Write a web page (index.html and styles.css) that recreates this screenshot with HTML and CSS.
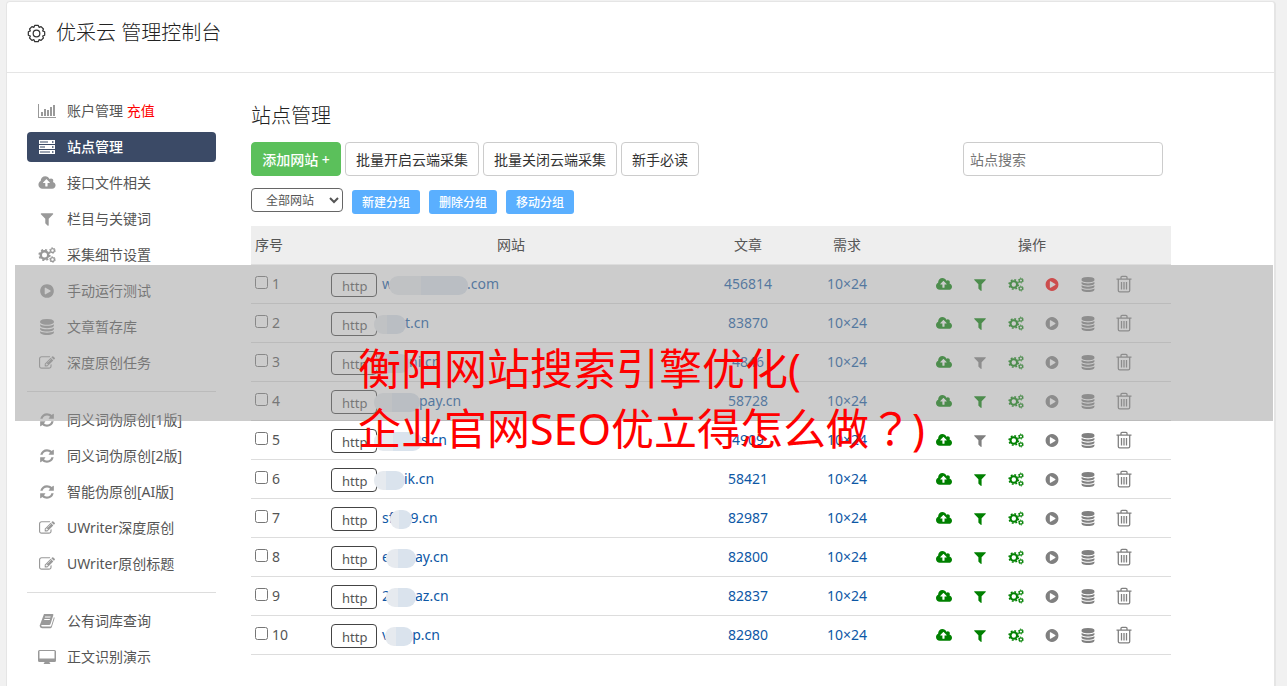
FILE: index.html
```html
<!DOCTYPE html>
<html lang="zh-CN">
<head>
    <meta charset="UTF-8">
    <meta name="viewport" content="width=device-width, initial-scale=1.0">
    <title>优采云 管理控制台</title>
    <link rel="stylesheet" href="styles.css">
</head>
<body>
    <svg class="sprite" aria-hidden="true">
        <symbol id="i-gear" viewBox="0 0 20 20">
            <path fill="none" stroke="currentColor" stroke-width="1.3" d="M16.500 7.300L18.600 8.200V11.800L16.500 12.700L17.300 14.800L14.800 17.300L12.700 16.500L11.800 18.600H8.200L7.300 16.500L5.200 17.300L2.700 14.800L3.500 12.700L1.400 11.800V8.200L3.500 7.300L2.700 5.200L5.200 2.700L7.300 3.500L8.200 1.400H11.800L12.700 3.500L14.800 2.700L17.300 5.200z" stroke-linejoin="round"/>
            <circle cx="10" cy="10" r="3.500" fill="none" stroke="currentColor" stroke-width="1.300"/>
        </symbol>
        <symbol id="i-chart" viewBox="0 0 18 16">
            <path d="M0 1h1v13h17v1H0zM3 9h2v4H3zM6 6h2v7H6zM9 7h2v6H9zM12 4h2v9h-2zM15 2h2v11h-2z"/>
        </symbol>
        <symbol id="i-server" viewBox="0 0 18 16">
            <path fill-rule="evenodd" d="M1 1h16v4H1zM2 2.500v1h8v-1zM14 2.300v1.400h1.500V2.300zM1 6h16v4H1zM2 7.500v1h5v-1zM14 7.300v1.400h1.500V7.300zM1 11h16v4H1zM2 12.500v1h10v-1zM14 12.300v1.400h1.500v-1.400z"/>
        </symbol>
        <symbol id="i-cloud" viewBox="-64 0 1920 1792">
            <path d="M1216 864q0-14-9-23l-352-352q-9-9-23-9t-23 9l-351 351q-10 12-10 24 0 14 9 23t23 9h224v352q0 13 9.500 22.500t22.500 9.500h192q13 0 22.500-9.500t9.500-22.500v-352h224q13 0 22.500-9.500t9.500-22.500zm640 288q0 159-112.500 271.500t-271.500 112.500h-1088q-185 0-316.500-131.500t-131.500-316.500q0-130 70-240t188-165q-2-30-2-43 0-212 150-362t362-150q156 0 285.500 87t188.500 231q71-62 166-62 106 0 181 75t75 181q0 76-41 138 130 31 213.500 135.500t83.500 238.500z"/>
        </symbol>
        <symbol id="i-filter" viewBox="0 0 1792 1792">
            <path d="M1595 295q17 41-14 70l-493 493v742q0 42-39 59-13 5-25 5-27 0-45-19l-256-256q-19-19-19-45v-486l-493-493q-31-29-14-70 17-39 59-39h1280q42 0 59 39z"/>
        </symbol>
        <symbol id="i-cogs" viewBox="0 0 18 16">
            <g fill="none" stroke="currentColor">
                <circle cx="6.500" cy="8" r="3.700" stroke-width="2.400"/>
                <circle cx="6.500" cy="8" r="5.300" stroke-width="1.600" stroke-dasharray="2.080 2.080"/>
                <circle cx="14.500" cy="3.500" r="1.900" stroke-width="1.300"/>
                <circle cx="14.500" cy="3.500" r="2.800" stroke-width="1" stroke-dasharray="1.460 1.460"/>
                <circle cx="14.500" cy="12.500" r="1.900" stroke-width="1.300"/>
                <circle cx="14.500" cy="12.500" r="2.800" stroke-width="1" stroke-dasharray="1.460 1.460"/>
            </g>
        </symbol>
        <symbol id="i-play" viewBox="0 0 1792 1792">
            <path d="M896 128q209 0 385.500 103t279.500 279.500 103 385.500-103 385.500-279.500 279.500-385.500 103-385.500-103-279.500-279.500-103-385.500 103-385.500 279.500-279.500 385.500-103zm384 823q32-18 32-55t-32-55l-544-320q-31-19-64-1-32 19-32 56v640q0 37 32 56 16 8 32 8 17 0 32-9z"/>
        </symbol>
        <symbol id="i-db" viewBox="0 0 1792 1792">
            <path d="M896 768q237 0 443-43t325-127v170q0 69-103 128t-280 93.500-385 34.500-385-34.500-280-93.500-103-128v-170q119 84 325 127t443 43zm0 768q237 0 443-43t325-127v170q0 69-103 128t-280 93.500-385 34.500-385-34.500-280-93.500-103-128v-170q119 84 325 127t443 43zm0-384q237 0 443-43t325-127v170q0 69-103 128t-280 93.500-385 34.500-385-34.500-280-93.500-103-128v-170q119 84 325 127t443 43zm0-1152q208 0 385 34.500t280 93.500 103 128v128q0 69-103 128t-280 93.500-385 34.500-385-34.500-280-93.500-103-128v-128q0-69 103-128t280-93.500 385-34.500z"/>
        </symbol>
        <symbol id="i-edit" viewBox="0 0 1792 1792">
            <path d="M888 1184l116-116-152-152-116 116v56h96v96h56zm440-720q-16-16-33 1l-350 350q-17 17-1 33t33-1l350-350q17-17 1-33zm80 594v190q0 119-84.500 203.500t-203.500 84.500h-832q-119 0-203.500-84.500t-84.500-203.500v-832q0-119 84.500-203.500t203.500-84.500h832q63 0 117 25 15 7 18 23 3 17-9 29l-49 49q-14 14-32 8-23-6-45-6h-832q-66 0-113 47t-47 113v832q0 66 47 113t113 47h832q66 0 113-47t47-113v-126q0-13 9-22l64-64q15-15 35-7t20 29zm-96-738l288 288-672 672h-288v-288zm444 132l-92 92-288-288 92-92q28-28 68-28t68 28l152 152q28 28 28 68t-28 68z"/>
        </symbol>
        <symbol id="i-refresh" viewBox="0 0 1792 1792">
            <path d="M1639 1056q0 5-1 7-64 268-268 434.500t-478 166.500q-146 0-282.500-55t-243.500-157l-129 129q-19 19-45 19t-45-19-19-45v-448q0-26 19-45t45-19h448q26 0 45 19t19 45-19 45l-137 137q71 66 161 102t187 36q134 0 250-65t186-179q11-17 53-117 8-23 30-23h192q13 0 22.500 9.500t9.500 22.500zm25-800v448q0 26-19 45t-45 19h-448q-26 0-45-19t-19-45 19-45l138-138q-148-137-349-137-134 0-250 65t-186 179q-11 17-53 117-8 23-30 23h-199q-13 0-22.500-9.500t-9.500-22.500v-7q65-268 270-434.500t480-166.500q146 0 284 55.500t245 156.500l130-129q19-19 45-19t45 19 19 45z"/>
        </symbol>
        <symbol id="i-book" viewBox="0 0 16 16">
            <path fill-rule="evenodd" d="M5 1h8.500q1.200 0 .8 1.200L11.500 11q-.3 1-1.400 1H3q-1 0-.8.800T3.500 13.600h7.700q.8 0 1-.7L15 4q.8.500.5 1.500L12.800 14q-.4 1.200-1.600 1.200H3Q.8 15.200.6 12.800zM6.100 3.600l-.3 1h5.600l.3-1zM5.400 6l-.3 1h5.600l.3-1z"/>
        </symbol>
        <symbol id="i-desktop" viewBox="0 0 18 16">
            <path fill-rule="evenodd" d="M1.500 1h15q1.500 0 1.500 1.500v9q0 1.500-1.500 1.500h-5q0 1 .8 1.500v.5H5.700v-.5q.8-.5.8-1.500h-5Q0 13 0 11.500v-9Q0 1 1.500 1zM1.500 2v7.500h15V2z"/>
        </symbol>
        <symbol id="i-trash" viewBox="0 0 16 18">
            <path fill="none" stroke="currentColor" stroke-width="1.300" d="M.5 4.200h15M5 4V2.300q0-1 1-1h4q1 0 1 1V4M2.300 4.500v11q0 1.400 1.400 1.400h8.600q1.400 0 1.400-1.400v-11M5.500 7v7.500M8 7v7.500M10.500 7v7.500"/>
        </symbol>
    </svg>

    <div class="card">
        <header class="card-header">
            <svg class="icon"><use href="#i-gear"/></svg>
            <h1>优采云 管理控制台</h1>
        </header>

        <div class="card-body">
            <nav class="sidebar">
                <ul>
                    <li><a href="#"><svg class="icon"><use href="#i-chart"/></svg><span>账户管理 <em>充值</em></span></a></li>
                    <li><a href="#" class="active"><svg class="icon"><use href="#i-server"/></svg>站点管理</a></li>
                    <li><a href="#"><svg class="icon"><use href="#i-cloud"/></svg>接口文件相关</a></li>
                    <li><a href="#"><svg class="icon"><use href="#i-filter"/></svg>栏目与关键词</a></li>
                    <li><a href="#"><svg class="icon"><use href="#i-cogs"/></svg>采集细节设置</a></li>
                    <li><a href="#"><svg class="icon"><use href="#i-play"/></svg>手动运行测试</a></li>
                    <li><a href="#"><svg class="icon"><use href="#i-db"/></svg>文章暂存库</a></li>
                    <li><a href="#"><svg class="icon"><use href="#i-edit"/></svg>深度原创任务</a></li>
                </ul>
                <hr>
                <ul>
                    <li><a href="#"><svg class="icon"><use href="#i-refresh"/></svg>同义词伪原创[1版]</a></li>
                    <li><a href="#"><svg class="icon"><use href="#i-refresh"/></svg>同义词伪原创[2版]</a></li>
                    <li><a href="#"><svg class="icon"><use href="#i-refresh"/></svg>智能伪原创[AI版]</a></li>
                    <li><a href="#"><svg class="icon"><use href="#i-edit"/></svg>UWriter深度原创</a></li>
                    <li><a href="#"><svg class="icon"><use href="#i-edit"/></svg>UWriter原创标题</a></li>
                </ul>
                <hr>
                <ul>
                    <li><a href="#"><svg class="icon"><use href="#i-book"/></svg>公有词库查询</a></li>
                    <li><a href="#"><svg class="icon"><use href="#i-desktop"/></svg>正文识别演示</a></li>
                </ul>
            </nav>

            <main class="content">
                <h2>站点管理</h2>
                <div class="toolbar">
                    <button class="btn btn-success">添加网站 +</button>
                    <button class="btn">批量开启云端采集</button>
                    <button class="btn">批量关闭云端采集</button>
                    <button class="btn">新手必读</button>
                    <input type="text" class="search" placeholder="站点搜索" aria-label="站点搜索">
                </div>
                <div class="groups">
                    <select class="group-select" aria-label="分组">
                        <option>全部网站</option>
                    </select>
                    <button class="btn-sm">新建分组</button>
                    <button class="btn-sm">删除分组</button>
                    <button class="btn-sm">移动分组</button>
                </div>
                <table>
                    <colgroup>
                        <col class="col-id">
                        <col class="col-site">
                        <col class="col-count">
                        <col class="col-need">
                        <col>
                    </colgroup>
                    <thead>
                        <tr>
                            <th>序号</th>
                            <th>网站</th>
                            <th>文章</th>
                            <th>需求</th>
                            <th>操作</th>
                        </tr>
                    </thead>
                    <tbody id="siteRows"></tbody>
                </table>
            </main>
        </div>

        <div class="banner">
            <p>衡阳网站搜索引擎优化(<br>企业官网SEO优立得怎么做<span class="mark" lang="zh-TW">？</span>)</p>
        </div>
    </div>

    <script>
        // start / end: visible parts of the domain, mask: width of the hidden part
        const sites = [
            { start: 'w', mask: 79, end: '.com', count: 456814, filter: true, running: true },
            { start: '', mask: 32, end: 't.cn', count: 83870, filter: true },
            { start: '', mask: 36, end: 'ni.cn', count: 4846, filter: false },
            { start: '', mask: 46, end: 'pay.cn', count: 58728, filter: true },
            { start: '', mask: 48, end: 's.cn', count: 4909, filter: false },
            { start: '', mask: 31, end: 'ik.cn', count: 58421, filter: true },
            { start: 'sf', mask: 22, end: '9.cn', count: 82987, filter: true },
            { start: 'e', mask: 30, end: 'ay.cn', count: 82800, filter: true },
            { start: '2', mask: 30, end: 'az.cn', count: 82837, filter: true },
            { start: 'v', mask: 28, end: 'p.cn', count: 82980, filter: true }
        ];

        function action(icon, label, color) {
            return `<button class="action ${color}" aria-label="${label}"><svg class="icon"><use href="#i-${icon}"/></svg></button>`;
        }

        document.getElementById('siteRows').innerHTML = sites.map((site, i) => `
            <tr>
                <td><label class="pick"><input type="checkbox">${i + 1}</label></td>
                <td>
                    <div class="site">
                        <select class="protocol" aria-label="协议"><option>http</option></select>
                        <a href="#">${site.start}<span class="mask ${site.start ? '' : 'mask-lead'}" style="width: ${site.mask}px"></span>${site.end}</a>
                    </div>
                </td>
                <td><a href="#">${site.count}</a></td>
                <td><a href="#">10×24</a></td>
                <td>
                    <div class="actions">
                        ${action('cloud', '上传', 'on')}
                        ${action('filter', '过滤', site.filter ? 'on' : '')}
                        ${action('cogs', '设置', 'on')}
                        ${action('play', '运行', site.running ? 'running' : '')}
                        ${action('db', '暂存库', '')}
                        ${action('trash', '删除', 'trash')}
                    </div>
                </td>
            </tr>`).join('');
    </script>
</body>
</html>
```
FILE: styles.css
```css
* {
    box-sizing: border-box;
}
body {
    margin: 0;
    padding: 1px 11px 0 6px;
    background-color: #f1f1f1;
    font-family: "Noto Sans", "Noto Sans CJK SC", sans-serif;
    font-size: 14px;
    line-height: 20px;
    color: #555;
}
button,
input,
select {
    font-family: inherit;
    font-size: 14px;
}
a {
    color: #0d57a5;
    text-decoration: none;
}
.sprite {
    position: absolute;
    width: 0;
    height: 0;
}
.icon {
    display: block;
    width: 16px;
    height: 16px;
    fill: currentColor;
}
.card {
    position: relative;
    min-height: 100vh;
    background-color: #fff;
    border: 1px solid #e5e5e5;
    border-right-width: 2px;
    border-radius: 4px;
}
.card-header {
    display: flex;
    align-items: center;
    gap: 10px;
    height: 71px;
    padding: 0 20px 8px;
    border-bottom: 1px solid #e5e5e5;
    color: #333;
}
.card-header .icon {
    width: 19px;
    height: 19px;
}
h1,
h2 {
    margin: 0;
    font-size: 20px;
    font-weight: 300;
    line-height: 28px;
    color: #222;
}
.card-body {
    display: flex;
    gap: 35px;
    padding: 23px 20px;
}

/* sidebar */
.sidebar {
    flex: 0 0 189px;
}
.sidebar ul {
    display: flex;
    flex-direction: column;
    gap: 6px;
    margin: 0;
    padding: 0;
    list-style: none;
}
.sidebar a {
    display: flex;
    align-items: center;
    gap: 11px;
    height: 30px;
    padding-left: 11px;
    border-radius: 4px;
    color: #555;
}
.sidebar .icon {
    width: 18px;
    color: #999;
}
.sidebar em {
    font-style: normal;
    color: #f00;
}
.sidebar .active {
    background-color: #3b4a66;
    color: #fff;
    font-weight: 500;
}
.sidebar .active .icon {
    color: #fff;
}
.sidebar hr {
    height: 1px;
    margin: 13px 0;
    border: 0;
    background-color: #ddd;
}

/* content */
.content {
    flex: 1;
    max-width: 920px;
    padding-top: 6px;
}
.toolbar {
    display: flex;
    gap: 4px;
    margin-top: 12px;
    padding-right: 8px;
}
.btn {
    height: 34px;
    padding: 0 10px;
    border: 1px solid #ccc;
    border-radius: 4px;
    background-color: #fff;
    color: #333;
    cursor: pointer;
}
.btn-success {
    width: 90px;
    padding: 0;
    border-color: #5bc05b;
    background-color: #5bc05b;
    color: #fff;
    font-weight: 500;
}
.search {
    width: 200px;
    height: 34px;
    margin-left: auto;
    padding: 0 6px;
    border: 1px solid #ccc;
    border-radius: 4px;
}
.search::placeholder {
    color: #757575;
}
.groups {
    display: flex;
    align-items: flex-end;
    gap: 9px;
    margin: 12px 0;
}
.group-select {
    width: 92px;
    height: 24px;
    margin-bottom: 2px;
    padding: 0 0 0 10px;
    border: 1px solid #666;
    border-radius: 4px;
    background-color: #fff;
    color: #555;
    font-size: 12px;
}
.btn-sm {
    width: 68px;
    height: 24px;
    padding: 0;
    border: 0;
    border-radius: 3px;
    background-color: #5aafff;
    color: #fff;
    font-size: 12px;
    font-weight: 500;
    cursor: pointer;
}

/* site table */
table {
    width: 100%;
    border-spacing: 0;
    table-layout: fixed;
}
.col-id {
    width: 76px;
}
.col-site {
    width: 368px;
}
.col-count {
    width: 106px;
}
.col-need {
    width: 92px;
}
th,
td {
    height: 39px;
    padding: 0 4px;
    border-bottom: 1px solid #ddd;
    text-align: center;
    font-weight: 400;
}
th {
    background-color: #eee;
}
th:first-child {
    text-align: left;
}
.pick {
    display: flex;
    gap: 4px;
}
.pick input {
    width: 13px;
    height: 13px;
    margin: 2px 0 0;
}
.site {
    display: flex;
    align-items: center;
    gap: 5px;
    text-align: left;
}
.protocol {
    appearance: none;
    width: 46px;
    height: 24px;
    margin-top: 2px;
    padding: 2px 0 0 10px;
    border: 1px solid #444;
    border-radius: 4px;
    background-color: #fff;
    color: #555;
    font-size: 13px;
}
.mask {
    position: relative;
    display: inline-block;
    height: 19px;
    margin: 0 -1px 0 -4px;
    border-radius: 9px;
    background-image: linear-gradient(90deg, #e6eaef 40%, #dae3ed 40%);
    vertical-align: -6px;
}
.mask-lead {
    margin-left: -8px;
}
.actions {
    display: flex;
    justify-content: center;
    padding-left: 3px;
}
.action {
    display: flex;
    justify-content: center;
    align-items: center;
    width: 36px;
    height: 24px;
    padding: 0;
    border: 0;
    background: none;
    color: #808080;
    cursor: pointer;
}
.action .icon {
    height: 15px;
}
.action.on {
    color: #008000;
}
.action.running {
    color: #f00;
}
.action.trash .icon {
    height: 18px;
}

/* translucent strip with the headline */
.banner {
    position: absolute;
    top: 263px;
    left: 8px;
    right: 1px;
    height: 156px;
    padding: 74px 0 0 343px;
    background-color: rgba(153, 153, 153, 0.5);
    pointer-events: none;
}
.banner p {
    margin: 0;
    color: #f00;
    font-size: 43px;
    line-height: 60px;
    white-space: nowrap;
}
.mark {
    font-family: "Noto Sans CJK TC", sans-serif;
    line-height: 1;
}
```
